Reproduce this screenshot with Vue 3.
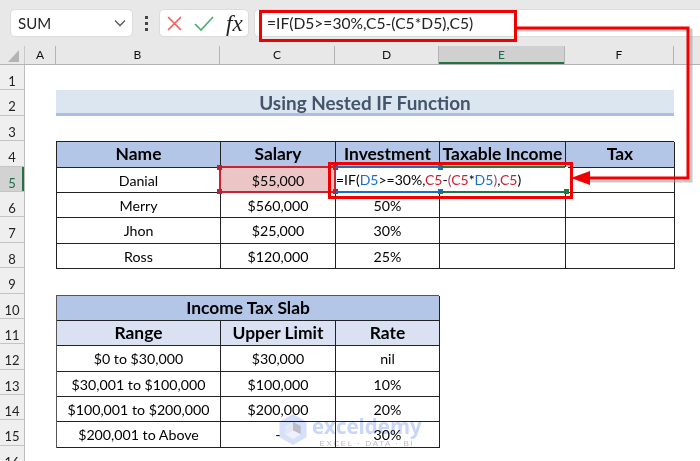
<script setup>
const cols = [['A',31],['B',164],['C',115],['D',104],['E',126],['F',109]]
const rowNums = Array.from({ length: 16 }, (_, i) => i + 1)
const salaries = [
  ['Danial', '$55,000', ''],
  ['Merry', '$560,000', '50%'],
  ['Jhon', '$25,000', '30%'],
  ['Ross', '$120,000', '25%']
]
const slabs = [
  ['$0 to $30,000', '$30,000', 'nil'],
  ['$30,001 to $100,000', '$100,000', '10%'],
  ['$100,001 to $200,000', '$200,000', '20%'],
  ['$200,001 to Above', '-', '30%']
]
</script>

<template>
  <div class="app">
    <header class="formula-row">
      <div class="namebox">
        <span>SUM</span>
        <svg width="12" height="8" viewBox="0 0 12 8"><path d="M1 1.5 6 6.5 11 1.5" fill="none" stroke="#555" stroke-width="1.3"/></svg>
      </div>
      <div class="dots"><i></i><i></i><i></i></div>
      <div class="btns">
        <svg width="15" height="15" viewBox="0 0 15 15"><path d="M1 1 14 14M14 1 1 14" stroke="#ee5b5b" stroke-width="1.6" fill="none"/></svg>
        <svg width="20" height="15" viewBox="0 0 20 15"><path d="M1 8 7 14 19 1" stroke="#4fae72" stroke-width="1.7" fill="none"/></svg>
        <span class="fx">fx</span>
      </div>
      <div class="input">=IF(D5&gt;=30%,C5-(C5*D5),C5)</div>
    </header>

    <div class="colhead">
      <div class="corner"><svg width="14" height="14" viewBox="0 0 14 14"><path d="M12 1V13H1Z" fill="#b4b4b4"/></svg></div>
      <div v-for="c in cols" :key="c[0]" class="col" :class="{ on: c[0] === 'E' }" :style="{ width: c[1] + 'px' }">{{ c[0] }}</div>
    </div>

    <div class="body">
      <div class="rowhead">
        <div v-for="n in rowNums" :key="n" class="rh" :class="{ on: n === 5 }">{{ n }}</div>
      </div>
      <main class="sheet">
        <div class="blank"></div>
        <div class="title">Using Nested IF Function</div>
        <div class="blank"></div>

        <div class="grid t1">
          <div class="c h">Name</div><div class="c h">Salary</div><div class="c h">Investment</div><div class="c h">Taxable Income</div><div class="c h">Tax</div>
          <template v-for="(r, i) in salaries" :key="r[0]">
            <div class="c">{{ r[0] }}</div><div class="c" :class="{ picked: i === 0 }">{{ r[1] }}</div><div class="c">{{ r[2] }}</div><div class="c"></div><div class="c"></div>
          </template>
        </div>

        <div class="blank"></div>

        <div class="grid t2">
          <div class="c h span">Income Tax Slab</div>
          <div class="c h h2">Range</div><div class="c h h2">Upper Limit</div><div class="c h h2">Rate</div>
          <template v-for="r in slabs" :key="r[0]">
            <div class="c">{{ r[0] }}</div><div class="c">{{ r[1] }}</div><div class="c">{{ r[2] }}</div>
          </template>
        </div>
      </main>
    </div>

    <!-- overlays: selection marks, callouts and watermark lie over the sheet -->
    <div class="cell-edit">=IF(<b class="bl">D5</b>&gt;=30%,<b class="rd">C5</b>-<b class="pu">(</b><b class="rd">C5</b>*<b class="bl">D5</b><b class="pu">)</b>,<b class="rd">C5</b><b class="pu2">)</b></div>
    <div class="sel-c5">
      <i class="hd tl"></i><i class="hd tr"></i><i class="hd bl"></i><i class="hd br"></i>
    </div>
    <div class="sel-d5"><i class="hd2 tr"></i><i class="hd2 br"></i></div>
    <div class="sel-e5"><i class="hd3 br"></i></div>

    <div class="box box-bar"></div>
    <div class="box box-cell"></div>

    <svg class="callout" width="700" height="461" viewBox="0 0 700 461">
      <path d="M517 30H691V181H590" fill="none" stroke="#9a9a9a" stroke-width="3" opacity=".55"/>
      <path d="M516 28H688V178H588" fill="none" stroke="#f00000" stroke-width="3"/>
      <path d="M571 178 590 171V185Z" fill="#f00000"/>
    </svg>

    <div class="wm">
      <svg width="28" height="31" viewBox="0 0 28 32">
        <path d="M14 0 28 8V24L14 32 0 24V8Z" fill="#d6e0fb"/>
        <path d="M14 8 22 12.5V21L14 17Z" fill="#b9bdc8"/>
        <path d="M14 8 6 12.5V21L14 17Z" fill="#e4e8f4"/>
        <path d="M6 21 14 17 22 21 14 26Z" fill="#eef1fb"/>
      </svg>
      <div class="wm-t">
        <div class="wm-a">exceldemy</div>
        <div class="wm-b">EXCEL · DATA · BI</div>
      </div>
    </div>
  </div>
</template>

<style scoped>
.app {
  position: relative;
  width: 700px;
  height: 461px;
  overflow: hidden;
  background: #e8e8e8;
  font-family: Lato, "Liberation Sans", sans-serif;
  color: #111;
}
.formula-row {
  display: flex;
  align-items: stretch;
  height: 28px;
  padding: 9px 0 9px 10px;
}
.namebox {
  width: 123px;
  box-sizing: border-box;
  background: #fff;
  border: 1px solid #dcdcdc;
  border-radius: 5px;
  display: flex;
  align-items: center;
  justify-content: space-between;
  padding: 0 6px 0 7px;
  font-size: 15px;
  color: #222;
}
.dots {
  width: 26px;
  display: flex;
  flex-direction: column;
  align-items: center;
  justify-content: center;
  gap: 3px;
}
.dots i { width: 3px; height: 3px; background: #444; }
.btns {
  width: 90px;
  box-sizing: border-box;
  background: #fff;
  border: 1px solid #dcdcdc;
  border-radius: 5px;
  display: flex;
  align-items: center;
  padding-left: 7px;
  gap: 12px;
}
.fx {
  font: italic 23px "Liberation Serif", serif;
  color: #222;
  line-height: 1;
}
.input {
  margin-left: 5px;
  flex: 1;
  background: #fff;
  border: 1px solid #dcdcdc;
  border-right: 0;
  border-radius: 5px 0 0 5px;
  padding-left: 12px;
  font-size: 15.6px;
  line-height: 26px;
  color: #222;
}
.colhead {
  display: flex;
  height: 19px;
  box-sizing: border-box;
  border-bottom: 1px solid #b4b4b4;
}
.corner {
  width: 25px;
  box-sizing: border-box;
  border-right: 1px solid #c8c8c8;
  display: flex;
  align-items: flex-end;
  justify-content: flex-end;
  padding: 0 3px 1px 0;
}
.col {
  box-sizing: border-box;
  border-right: 1px solid #b4b4b4;
  text-align: center;
  font-size: 12px;
  line-height: 18px;
}
.col.on {
  background: #d0d0d0;
  color: #1d6b41;
  box-shadow: inset 0 -2px #217346;
}
.body { display: flex; }
.rowhead {
  width: 25px;
  box-sizing: border-box;
  border-right: 1px solid #bdbdbd;
  background: #efefef;
}
.rh {
  height: 25.4px;
  box-sizing: border-box;
  border-bottom: 1px solid #c4c4c4;
  text-align: center;
  font-size: 13px;
  line-height: 33px;
  color: #222;
}
.rh.on {
  background: #d2d2d2;
  color: #1d6b41;
  box-shadow: inset -2px 0 #217346;
}
.sheet {
  width: 675px;
  height: 396px;
  box-sizing: border-box;
  padding-left: 31px;
  background: #fff;
}
.blank { height: 25.4px; }
.title {
  width: 618px;
  height: 25.4px;
  box-sizing: border-box;
  background: #dce6f1;
  border-bottom: 3px solid #a9bee2;
  text-align: center;
  font-weight: 700;
  font-size: 18.9px;
  line-height: 25px;
  color: #44546a;
}
.grid {
  display: grid;
  grid-auto-rows: 25.4px;
  box-sizing: border-box;
  border-top: 1px solid #222;
  border-left: 1px solid #222;
}
.t1 { width: 618px; grid-template-columns: 164px 115px 104px 126px 109px; }
.t2 { width: 383px; grid-template-columns: 164px 115px 104px; border-color: #555; }
.c {
  box-sizing: border-box;
  border-right: 1px solid #222;
  border-bottom: 1px solid #222;
  text-align: center;
  font-size: 14.2px;
  line-height: 25px;
  color: #000;
}
.h { background: #b4c6e7; font-weight: 700; font-size: 17.4px; line-height: 24px; }
.h2 { background: #d9e1f2; }
.span { grid-column: 1 / 4; }
.picked { background: #ecc6c6; }

.sel-c5 {
  position: absolute;
  left: 219px; top: 166px;
  width: 117px; height: 27px;
  box-sizing: border-box;
  border: 2px solid #c9232f;
}
.sel-d5 {
  position: absolute;
  left: 336px; top: 166px;
  width: 103px; height: 27px;
  box-sizing: border-box;
  border-top: 2px solid #1a6fc4;
  border-bottom: 2px solid #1a6fc4;
}
.sel-e5 {
  position: absolute;
  left: 439px; top: 166px;
  width: 126px; height: 27px;
  box-sizing: border-box;
  border-top: 2px solid #1f7a45;
  border-bottom: 2px solid #1f7a45;
}
.cell-edit {
  position: absolute;
  left: 336px; top: 167px;
  width: 232px; height: 25px;
  background: #fff;
  font-size: 14px;
  line-height: 25px;
  color: #000;
  white-space: nowrap;
}
.cell-edit b { font-weight: 400; }
.cell-edit .bl { color: #1a6fc4; }
.cell-edit .rd { color: #c9232f; }
.cell-edit .pu { color: #b03a6a; }
.hd, .hd2, .hd3 { position: absolute; width: 5px; height: 5px; }
.hd { background: #b8232f; }
.hd2 { background: #1a6fc4; }
.hd3 { background: #1f7a45; }
.tl { left: -4px; top: -3px; }
.tr { right: -4px; top: -3px; }
.bl.hd { left: -4px; bottom: -3px; }
.br { right: -4px; bottom: -3px; }

.box {
  position: absolute;
  box-sizing: border-box;
  border: 3px solid #f00000;
}
.box-bar { left: 259px; top: 10px; width: 258px; height: 32px; }
.box-cell { left: 328px; top: 162px; width: 245px; height: 37px; }
.callout { position: absolute; left: 0; top: 0; pointer-events: none; }

.wm {
  position: absolute;
  left: 279px; top: 414px;
  display: flex;
  gap: 5px;
  mix-blend-mode: multiply;
  pointer-events: none;
}
.wm-a {
  font: 700 20.5px/24px "Open Sans", sans-serif;
  color: #c8d6fb;
}
.wm-b {
  font: 400 8px/10px "Liberation Sans", sans-serif;
  letter-spacing: 1.6px;
  color: #bdbdbd;
  text-align: center;
  margin-top: 1px;
  white-space: nowrap;
}
</style>
